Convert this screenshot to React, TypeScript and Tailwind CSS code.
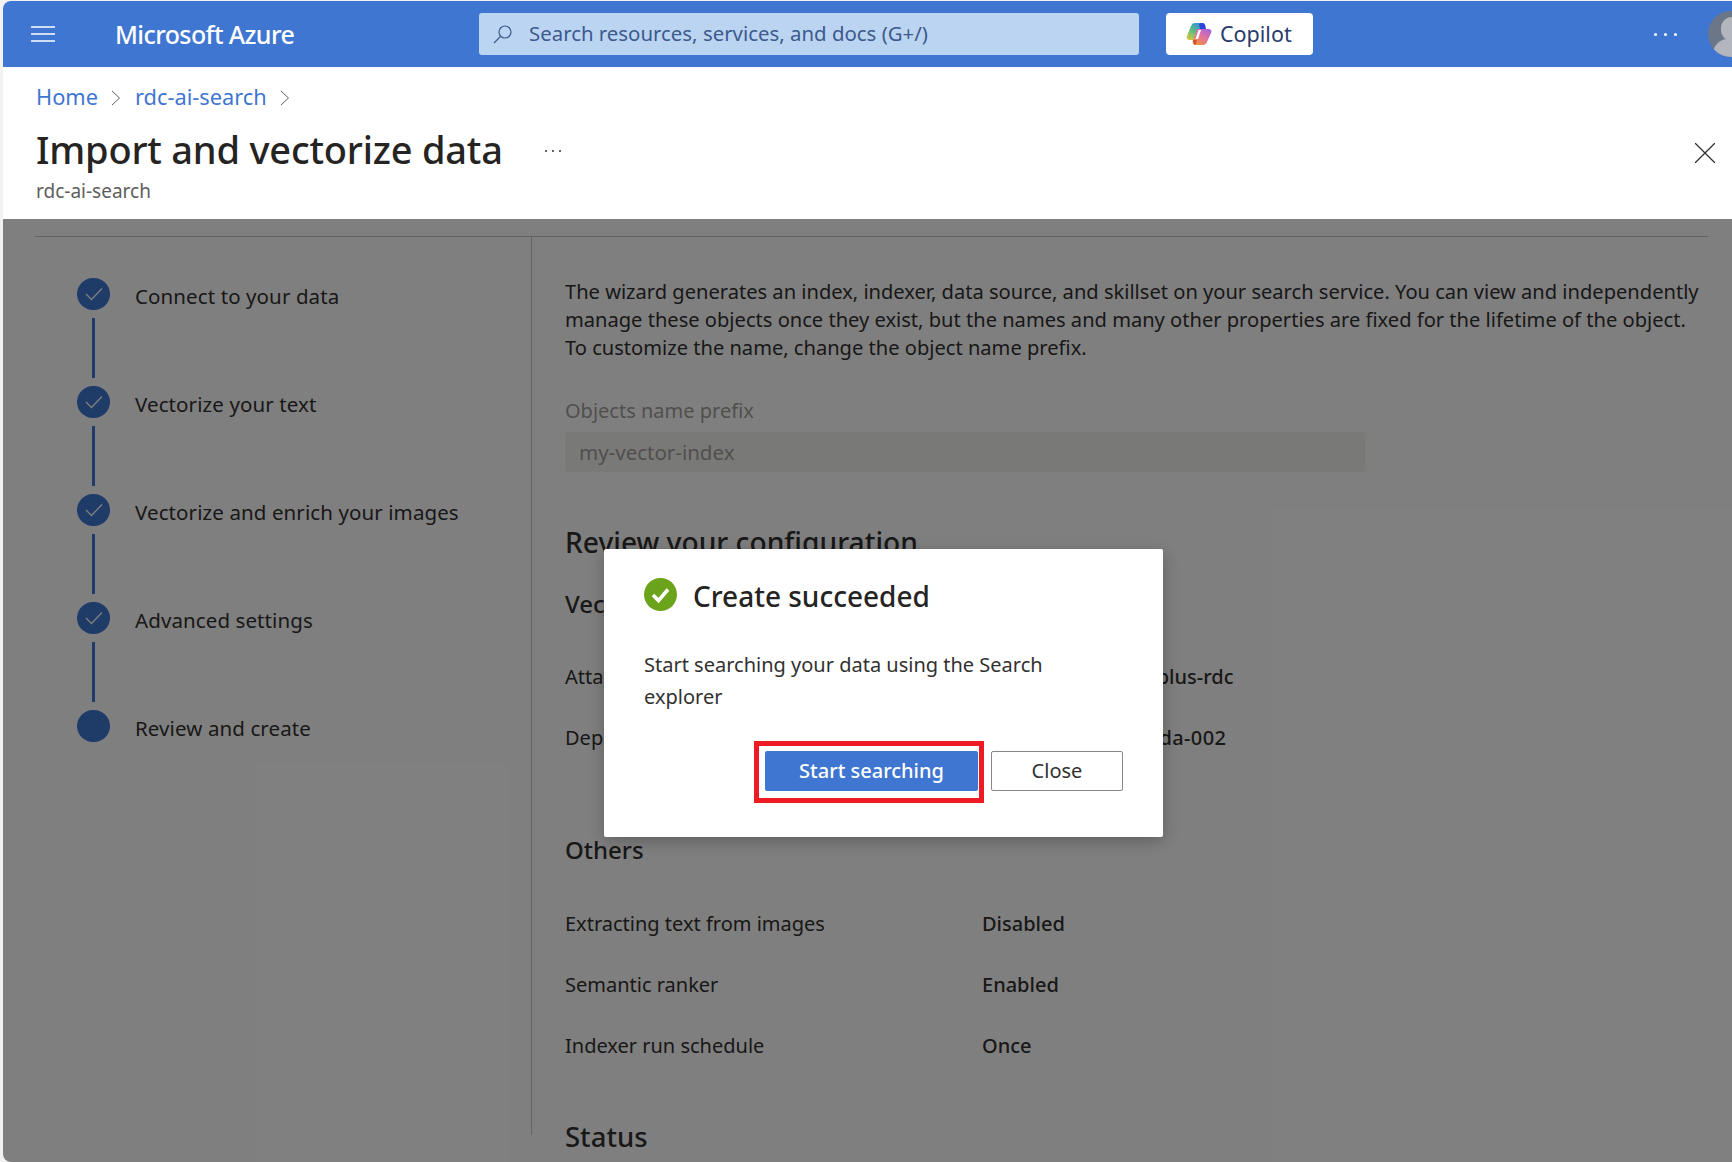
import React from "react";

const steps = ["Connect to your data", "Vectorize your text", "Vectorize and enrich your images", "Advanced settings", "Review and create"];

function Check() {
  return (
    <svg viewBox="0 0 18 14" className="w-[18px] h-[14px]" fill="none" stroke="#ffffff" strokeWidth="1.3">
      <path d="M1 7 L6.5 12.5 L17 1.5" />
    </svg>
  );
}

function Step({ label, index }: { label: string; index: number }) {
  const last = index === steps.length - 1;
  return (
    <div className="flex">
      <div className="flex flex-col items-center w-[33px]">
        <div className="w-[33px] h-[32px] rounded-full bg-[#3f76d1] flex items-center justify-center shrink-0">
          {last ? null : <Check />}
        </div>
        {last ? null : <div className="w-[3px] h-[60px] mt-[8px] mb-[8px] bg-[#3f76d1]" />}
      </div>
      <div className="ml-[25px] text-[20.5px] leading-[36px] tracking-[0.1px] text-[#323130]">{label}</div>
    </div>
  );
}

function Row({ label, value, className, valueClass }: { label: string; value: string; className?: string; valueClass?: string }) {
  return (
    <div className={"flex text-[20px] leading-[28px] " + (className ?? "")}>
      <div className="w-[417px] shrink-0 text-[#323130]">{label}</div>
      <div className={"text-[#323130] font-medium " + (valueClass ?? "")}>{value}</div>
    </div>
  );
}

export default function App() {
  return (
    <div className="h-[1162px] w-full overflow-hidden bg-[#f2f2f2] pl-[3px] pt-[1px] font-['Noto_Sans',sans-serif]">
      <div className="h-full flex flex-col overflow-hidden rounded-l-[8px] bg-white">
        <header className="h-[66px] shrink-0 bg-[#3f76d1] flex items-center text-white">
          <svg viewBox="0 0 24 18" className="ml-[28px] w-[24px] h-[18px] shrink-0" stroke="#ffffff" strokeWidth="1.5">
            <path d="M0 2 H24 M0 9 H24 M0 16 H24" />
          </svg>
          <div className="ml-[60px] w-[364px] shrink-0 text-[25px] font-medium tracking-[-0.6px] mt-[1px]">Microsoft Azure</div>
          <div className="w-[660px] h-[42px] shrink-0 rounded-[3px] bg-[#bbd4f1] flex items-center pl-[14px] text-[#3d5a8c] text-[20.4px]">
            <svg viewBox="0 0 20 20" className="w-[20px] h-[20px] shrink-0" fill="none" stroke="#3d5a8c" strokeWidth="1.2">
              <circle cx="12" cy="8" r="6" />
              <path d="M7.5 12.5 L1 19" />
            </svg>
            <span className="ml-[16px] -mt-[1px]">Search resources, services, and docs (G+/)</span>
          </div>
          <div className="ml-[27px] w-[147px] h-[42px] shrink-0 rounded-[4px] bg-white flex items-center pl-[20px] text-[#2a3b6e] text-[21.5px]">
            <svg viewBox="0 0 26 24" className="w-[26px] h-[24px] shrink-0">
              <defs>
                <linearGradient id="cpA" x1="0" y1="1" x2="0.7" y2="0">
                  <stop offset="0" stopColor="#e8c93a" />
                  <stop offset="0.5" stopColor="#5fbf7a" />
                  <stop offset="1" stopColor="#2f8fe6" />
                </linearGradient>
                <linearGradient id="cpB" x1="0.3" y1="1" x2="1" y2="0">
                  <stop offset="0" stopColor="#f0903f" />
                  <stop offset="0.5" stopColor="#e070a8" />
                  <stop offset="1" stopColor="#9a5fe0" />
                </linearGradient>
              </defs>
              <path d="M9 1 H16 C18 1 19 2.5 19.5 5 L15 18 H4 C1.5 18 0 16.5 1 14 L5 4 C5.8 2 7 1 9 1Z" fill="url(#cpA)" />
              <path d="M13 2 C15 0.5 18 0.5 19 3 L20 7 L14 7Z" fill="#2b45d8" />
              <path d="M11 7 H22 C25 7 26 9 25 11 L21 20 C20.2 22 19 23 17 23 H10 C8 23 7 22 6.5 20 L11 7Z" fill="url(#cpB)" />
              <path d="M7 18 H11 L9.5 23 C8 23 7 21 7 18Z" fill="#d8502c" />
              <path d="M12.5 8 H15 L12 17 H9.5Z" fill="#ffffff" />
            </svg>
            <span className="ml-[8px] mt-[1px]">Copilot</span>
          </div>
          <div className="ml-[341px] flex gap-[7px] shrink-0">
            <div className="w-[3px] h-[3px] rounded-full bg-white" />
            <div className="w-[3px] h-[3px] rounded-full bg-white" />
            <div className="w-[3px] h-[3px] rounded-full bg-white" />
          </div>
          <div className="ml-[31px] w-[46px] h-[46px] shrink-0 rounded-full bg-[#6c7689] relative overflow-hidden">
            <div className="absolute left-[13px] top-[6px] w-[22px] h-[24px] rounded-full bg-[#b3b7bd]" />
            <div className="absolute left-[5px] top-[28px] w-[38px] h-[30px] rounded-full bg-[#b3b7bd]" />
          </div>
        </header>

        <div className="h-[152px] shrink-0 pl-[33px] pr-[16px] relative">
          <div className="pt-[15px] flex items-center h-[46px] text-[21.8px] text-[#3f76d1]">
            <span>Home</span>
            <svg viewBox="0 0 10 16" className="w-[10px] h-[16px] ml-[13px] mr-[14px] shrink-0" fill="none" stroke="#605e5c" strokeWidth="1"><path d="M1 1 L8.5 8 L1 15" /></svg>
            <span>rdc-ai-search</span>
            <svg viewBox="0 0 10 16" className="w-[10px] h-[16px] mx-[13px] shrink-0" fill="none" stroke="#605e5c" strokeWidth="1"><path d="M1 1 L8.5 8 L1 15" /></svg>
          </div>
          <div className="flex items-center mt-[10px] h-[52px]">
            <h1 className="text-[38px] font-medium text-[#252423] tracking-[-0.2px]">Import and vectorize data</h1>
            <div className="ml-[42px] flex gap-[5px] mt-[4px]">
              <div className="w-[2px] h-[2px] rounded-full bg-[#323130]" />
              <div className="w-[2px] h-[2px] rounded-full bg-[#323130]" />
              <div className="w-[2px] h-[2px] rounded-full bg-[#323130]" />
            </div>
            <svg viewBox="0 0 20 20" className="ml-auto mr-[1px] w-[20px] h-[20px] mt-[7px]" stroke="#323130" strokeWidth="1.3"><path d="M0 0 L20 20 M20 0 L0 20" /></svg>
          </div>
          <div className="text-[19px] leading-[24px] text-[#605e5c] mt-[4px]">rdc-ai-search</div>
        </div>

        <div className="relative flex-1 overflow-hidden pt-[17px] pl-[32px] pr-[24px] bg-white">
          <div className="border-t border-[#c8c6c4] flex items-start">
            <aside className="w-[497px] h-[898px] shrink-0 border-r border-[#c8c6c4] pl-[42px] pt-[41px]">
              {steps.map((s, i) => (
                <Step key={s} label={s} index={i} />
              ))}
            </aside>
            <main className="pl-[33px] min-w-0 flex-1 text-[#323130]">
              <p className="mt-[41px] text-[20.1px] leading-[28px] whitespace-nowrap">The wizard generates an index, indexer, data source, and skillset on your search service. You can view and independently</p>
              <p className="text-[20.1px] leading-[28px] whitespace-nowrap">manage these objects once they exist, but the names and many other properties are fixed for the lifetime of the object.</p>
              <p className="text-[20.1px] leading-[28px] whitespace-nowrap">To customize the name, change the object name prefix.</p>
              <div className="mt-[35px] text-[20px] leading-[28px] text-[#a19f9d]">Objects name prefix</div>
              <div className="mt-[7px] w-[800px] h-[40px] rounded-[2px] bg-[#f3f2ee] pl-[14px] text-[20.5px] leading-[40px] text-[#a19f9d]">my-vector-index</div>
              <h2 className="mt-[50px] text-[28.2px] leading-[40px] font-medium">Review your configuration</h2>
              <h3 className="mt-[24px] text-[24px] leading-[36px] font-medium">Vectorize your text</h3>
              <Row className="mt-[41px]" label="Attached Azure OpenAI" value="myopenai-service-plus-rdc" />
              <Row className="mt-[33px]" label="Deployment model" value="text-embedding-ada-002" valueClass="tracking-[0.4px]" />
              <h3 className="mt-[80px] text-[24px] leading-[36px] font-medium">Others</h3>
              <Row className="mt-[42px]" label="Extracting text from images" value="Disabled" />
              <Row className="mt-[33px]" label="Semantic ranker" value="Enabled" />
              <Row className="mt-[33px]" label="Indexer run schedule" value="Once" />
              <h3 className="mt-[57px] text-[27.5px] leading-[40px] font-medium">Status</h3>
            </main>
          </div>

          <div className="absolute inset-0 bg-black/50" />

          <div className="absolute left-[601px] top-[330px] w-[559px] h-[288px] bg-white rounded-[2px] shadow-[0_4px_16px_rgba(0,0,0,0.25)] pl-[40px] pr-[40px] pt-[29px]">
            <div className="flex items-center h-[33px]">
              <svg viewBox="0 0 33 33" className="w-[33px] h-[33px] shrink-0">
                <circle cx="16.5" cy="16.5" r="16.5" fill="#6ba31b" />
                <path d="M9 17 L14.5 22.5 L24 11.5" fill="none" stroke="#ffffff" strokeWidth="3.6" />
              </svg>
              <div className="ml-[16px] mt-[2px] text-[28px] font-medium text-[#252423]">Create succeeded</div>
            </div>
            <p className="mt-[38px] text-[20px] leading-[32px] text-[#323130]">Start searching your data using the Search explorer</p>
            <div className="mt-[38px] h-[40px] flex justify-end items-start">
              <div className="border-[5px] border-[#ed1c24] pt-[5px] pb-[7px] pl-[6px] pr-[1px] -mt-[10px] mr-[7px] shrink-0">
                <div className="w-[213px] h-[40px] rounded-[2px] bg-[#3f76d1] text-white text-[20px] font-medium flex items-center justify-center">Start searching</div>
              </div>
              <div className="w-[132px] h-[40px] shrink-0 rounded-[2px] border border-[#8a8886] bg-white text-[#323130] text-[20px] flex items-center justify-center">Close</div>
            </div>
          </div>
        </div>
      </div>
    </div>
  );
}
